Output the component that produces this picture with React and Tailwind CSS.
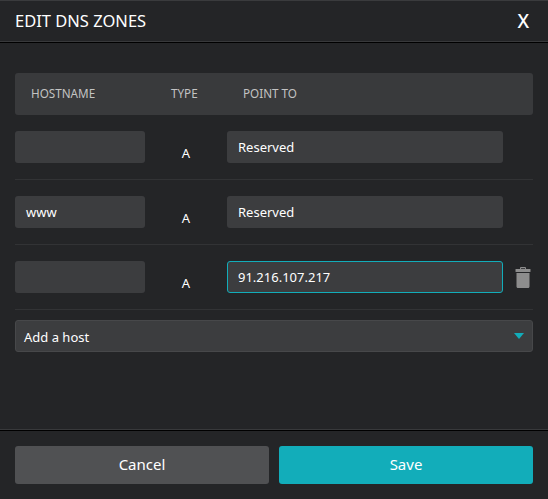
const font = { fontFamily: '"Noto Sans", sans-serif' };

function TextBox({ value, className = '' }) {
  return (
    <div className={`h-8 rounded-[3px] bg-[#3c3d3f] px-[11px] text-[13px] leading-8 text-white ${className}`}>
      {value}
    </div>
  );
}

function TrashIcon() {
  return (
    <svg width="16" height="21" viewBox="0 0 16 21" fill="#8d8d8d">
      <path d="M5 2.500V1.200C5 .6 5.500 0 6.200 0h3.600C10.500 0 11 .6 11 1.200V2.500H10V1.200H6V2.500Z" />
      <rect x="0.500" y="2" width="15" height="3" rx="0.500" />
      <path d="M1.500 6h13v13.500c0 .8-.6 1.500-1.400 1.500H2.900c-.8 0-1.400-.7-1.400-1.500Z" />
    </svg>
  );
}

function Row({ host, target, focused }) {
  return (
    <div className="flex h-[65px] items-start border-b border-[#323335] pt-[16px]">
      <TextBox value={host} className="w-[130px]" />
      <div className="w-[82px] pt-[12px] text-center text-[13px] leading-5 text-white">A</div>
      {focused ? (
        <div className="h-8 w-[276px] rounded-[3px] border border-[#12adba] bg-[#3c3d3f] px-[10px] text-[13px] leading-[30px] text-white">{target}</div>
      ) : (
        <TextBox value={target} className="w-[276px]" />
      )}
      {focused && (
        <div className="ml-[12px] pt-[6px]">
          <TrashIcon />
        </div>
      )}
    </div>
  );
}

export default function App() {
  return (
    <div style={font} className="flex h-[499px] w-[548px] flex-col overflow-hidden border-t border-[#3a3b3d] bg-[#242527]">
      {/* Header */}
      <div className="flex h-[42px] shrink-0 items-center justify-between border-b border-black pl-[15px] pr-[19px] shadow-[inset_0_-1px_0_#38393b]">
        <span className="text-[16.500px] text-white">EDIT DNS ZONES</span>
        <span className="text-[19px] font-medium text-white">X</span>
      </div>

      {/* Body */}
      <div className="flex-1 px-[15px] pt-[30px]">
        <div className="flex h-[42px] items-center rounded-[3px] bg-[#393a3c] text-[11.700px] text-[#c3c3c3]">
          <span className="w-[156px] pl-[16px]">HOSTNAME</span>
          <span className="w-[72px]">TYPE</span>
          <span>POINT TO</span>
        </div>
        <Row host="" target="Reserved" />
        <Row host="www" target="Reserved" />
        <Row host="" target="91.216.107.217" focused />
        <div className="mt-[10px] flex h-8 items-center justify-between rounded-[3px] border border-[#47484a] bg-[#3c3d3f] pl-2 pr-[8px] text-[13px] text-white">
          <span className="pt-[3px]">Add a host</span>
          <svg width="10" height="6" viewBox="0 0 10 6" fill="#12adba"><path d="M0 0h10L5 6Z" /></svg>
        </div>
      </div>

      {/* Footer */}
      <div className="flex h-[70px] shrink-0 items-start gap-[10px] border-t border-[#38393b] px-[15px] pt-[16px] shadow-[inset_0_1px_0_#000]">
        <button className="h-[38px] flex-1 rounded-[3px] bg-[#505153] pb-[1px] text-[15px] text-white">Cancel</button>
        <button className="h-[38px] flex-1 rounded-[3px] bg-[#12adba] pb-[1px] text-[15px] text-white">Save</button>
      </div>
    </div>
  );
}
